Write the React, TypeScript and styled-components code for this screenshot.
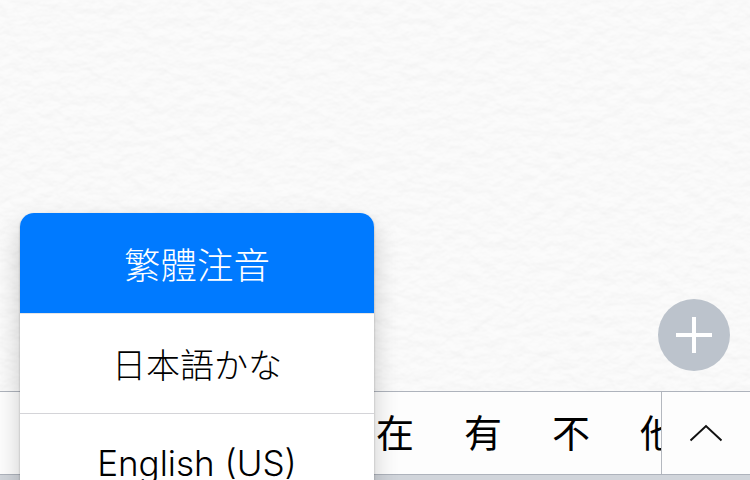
import React from "react";
import styled, { createGlobalStyle } from "styled-components";

const Global = createGlobalStyle`
  html, body { margin: 0; padding: 0; background: #f4f4f4; }
  body { font-family: "Noto Sans CJK TC", "Liberation Sans", sans-serif; }
`;

const Page = styled.div`
  position: relative;
  width: 750px;
  height: 480px;
  overflow: hidden;
  display: flex;
  flex-direction: column;
`;

const Paper = styled.div`
  position: relative;
  height: 391px;
  flex: none;
  background: #f4f4f4;
  overflow: hidden;
`;

const Texture = styled.svg`
  display: block;
  width: 100%;
  height: 100%;
`;

const CandidateBar = styled.div`
  display: flex;
  height: 84px;
  flex: none;
  box-sizing: border-box;
  border-top: 1px solid #aeb3bc;
  border-bottom: 1px solid #aeb3bc;
  background: #fdfdfd;
`;

const Candidates = styled.div`
  flex: none;
  width: 661px;
  box-sizing: border-box;
  padding-left: 351px;
  padding-bottom: 4px;
  display: flex;
  overflow: hidden;
`;

const Candidate = styled.div`
  flex: none;
  width: 88px;
  display: flex;
  align-items: center;
  justify-content: center;
  font-family: "Noto Sans CJK TC", sans-serif;
  font-weight: 400;
  font-size: 38px;
  line-height: 78px;
  color: #000;
`;

const Expand = styled.div`
  flex: 1;
  border-left: 1px solid #b4b8bf;
  display: flex;
  align-items: center;
  justify-content: center;
`;

const KeyboardEdge = styled.div`
  flex: 1;
  background: #d1d5db;
`;

const AddButton = styled.div`
  position: absolute;
  left: 658px;
  top: 299px;
  width: 72px;
  height: 72px;
  border-radius: 50%;
  background: #bcc3cc;
  display: flex;
  align-items: center;
  justify-content: center;
`;

const ShadowClip = styled.div`
  position: absolute;
  left: 0;
  top: 180px;
  width: 398px;
  height: 300px;
  overflow: hidden;
`;

const Menu = styled.div`
  position: absolute;
  left: 20px;
  top: 33px;
  width: 354px;
  height: 320px;
  border-radius: 14px;
  overflow: hidden;
  background: #fff;
`;

const MenuShadow = styled.div`
  position: absolute;
  left: 20px;
  top: 33px;
  width: 354px;
  height: 320px;
  border-radius: 14px;
  box-shadow: 0 1px 2px rgba(0, 0, 0, 0.32), 0 12px 26px rgba(0, 0, 0, 0.2);
`;

const MenuItem = styled.div<{ $active?: boolean; $size: number; $h: number }>`
  height: ${(p) => p.$h}px;
  box-sizing: border-box;
  display: flex;
  align-items: center;
  justify-content: center;
  font-family: "Noto Sans CJK TC", sans-serif;
  font-weight: 300;
  font-size: ${(p) => p.$size}px;
  color: ${(p) => (p.$active ? "#fff" : "#000")};
  background: ${(p) => (p.$active ? "#007aff" : "#fff")};
  border-bottom: 1px solid ${(p) => (p.$active ? "#e4e4e6" : "#d4d4d8")};
`;

const LatinItem = styled(MenuItem)`
  font-family: "Inter", sans-serif;
  font-weight: 350;
  border-bottom: none;
  padding-bottom: 2px;
`;

export default function App() {
  return (
    <Page>
      <Global />
      <Paper>
        <Texture xmlns="http://www.w3.org/2000/svg" aria-hidden="true">
          <filter id="paper" x="0" y="0" width="100%" height="100%">
            <feTurbulence type="fractalNoise" baseFrequency="0.07 0.09" numOctaves="3" seed="7" result="n" />
            <feDiffuseLighting in="n" surfaceScale="0.6" diffuseConstant="1" lightingColor="#fdfdfd">
              <feDistantLight azimuth="90" elevation="75" />
            </feDiffuseLighting>
          </filter>
          <rect width="100%" height="100%" filter="url(#paper)" />
        </Texture>
      </Paper>
      <CandidateBar>
        <Candidates>
          {["在", "有", "不", "他"].map((c) => (
            <Candidate key={c}>{c}</Candidate>
          ))}
        </Candidates>
        <Expand>
          <svg width="34" height="18" viewBox="0 0 34 18" fill="none">
            <path d="M1.5 16.5 L17 2 L32.5 16.5" stroke="#111" strokeWidth="2" />
          </svg>
        </Expand>
      </CandidateBar>
      <KeyboardEdge />
      <AddButton>
        <svg width="36" height="36" viewBox="0 0 36 36">
          <path d="M0 18 H36 M18 0 V36" stroke="#fff" strokeWidth="4" />
        </svg>
      </AddButton>
      <ShadowClip>
        <MenuShadow />
        <Menu>
          <MenuItem $active $size={36.5} $h={101}>繁體注音</MenuItem>
          <MenuItem $size={34} $h={100}>日本語かな</MenuItem>
          <LatinItem $size={35} $h={100}>English (US)</LatinItem>
        </Menu>
      </ShadowClip>
    </Page>
  );
}
